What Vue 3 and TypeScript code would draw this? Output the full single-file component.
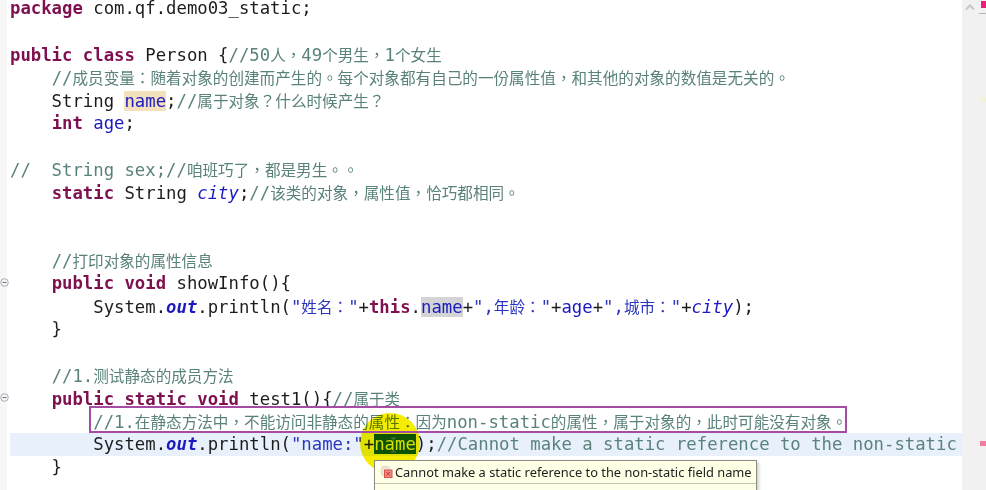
<script setup lang="ts">
type Tok = [string, string?]
interface Line { toks: Tok[]; fold?: boolean; current?: boolean }

const lines: Line[] = [
  { toks: [['package', 'kw'], [' com.qf.demo03_static;']] },
  { toks: [] },
  { toks: [['public', 'kw'], [' '], ['class', 'kw'], [' Person {'], ['//50人，49个男生，1个女生', 'cm']] },
  { toks: [['    '], ['//成员变量：随着对象的创建而产生的。每个对象都有自己的一份属性值，和其他的对象的数值是无关的。', 'cm']] },
  { toks: [['    String '], ['name', 'fd hl-occ'], [';'], ['//属于对象？什么时候产生？', 'cm']] },
  { toks: [['    '], ['int', 'kw'], [' '], ['age', 'fd'], [';']] },
  { toks: [] },
  { toks: [['//  String sex;//咱班巧了，都是男生。。', 'cm']] },
  { toks: [['    '], ['static', 'kw'], [' String '], ['city', 'fd it'], [';'], ['//该类的对象，属性值，恰巧都相同。', 'cm']] },
  { toks: [] },
  { toks: [] },
  { toks: [['    '], ['//打印对象的属性信息', 'cm']] },
  { fold: true, toks: [['    '], ['public', 'kw'], [' '], ['void', 'kw'], [' showInfo(){']] },
  { toks: [['        System.'], ['out', 'fd it bd'], ['.println('], ['"姓名："', 'st'], ['+'], ['this', 'kw'], ['.'], ['name', 'fd hl-read'], ['+'], ['",年龄："', 'st'], ['+'], ['age', 'fd'], ['+'], ['",城市："', 'st'], ['+'], ['city', 'fd it'], [');']] },
  { toks: [['    }']] },
  { toks: [] },
  { toks: [['    '], ['//1.测试静态的成员方法', 'cm']] },
  { fold: true, toks: [['    '], ['public', 'kw'], [' '], ['static', 'kw'], [' '], ['void', 'kw'], [' test1(){'], ['//属于类', 'cm']] },
  { toks: [['        '], ['//1.在静态方法中，不能访问非静态的属性：因为non-static的属性，属于对象的，此时可能没有对象。', 'cm']] },
  { current: true, toks: [['        System.'], ['out', 'fd it bd'], ['.println('], ['"name:"', 'st'], ['+'], ['name', 'hl-err'], [');'], ['//Cannot make a static reference to the non-static', 'cm']] },
  { toks: [['    }']] },
]

// CJK runs are set smaller than the Latin code font; full-width punctuation sits centred in its cell.
function pieces(text: string): { t: string; cls: string }[] {
  return text
    .split(/([，。：？]+|[\u3000-\u9fff]+)/)
    .filter((t) => t.length > 0)
    .map((t) => ({
      t,
      cls: /[，。：？]/.test(t) ? 'cjk punct' : /[\u3000-\u9fff]/.test(t) ? 'cjk' : '',
    }))
}
</script>

<template>
  <div class="screen">
    <div class="editor">
      <div class="ruler"></div>
      <div class="code">
        <div v-for="(line, i) in lines" :key="i" class="row" :class="{ current: line.current }">
          <svg v-if="line.fold" class="fold" width="9" height="9" viewBox="0 0 9 9">
            <circle cx="4.5" cy="4.5" r="3.8" fill="#f4f4f6" stroke="#a9adb5" />
            <path d="M2.5 4.5h4" stroke="#6d7280" />
          </svg>
          <span v-for="(tok, j) in line.toks" :key="j" :class="tok[1]"><span
            v-for="(p, k) in pieces(tok[0])" :key="k" :class="p.cls">{{ p.t }}</span></span>
        </div>
      </div>
      <div class="overview">
        <div class="ov-top">
          <svg width="12" height="8" viewBox="0 0 12 8"><path d="M2 6.5 6 2.5l4 4" fill="none" stroke="#c9c9c9" stroke-width="2" /></svg>
          <i class="ov-square"></i>
        </div>
        <i class="ov-line"></i>
        <i class="ov-warn"></i>
        <i class="ov-err"></i>
      </div>
    </div>

    <div class="spot"></div>
    <div class="callout"></div>
    <svg class="ibeam" width="7" height="16" viewBox="0 0 7 16">
      <path d="M1 1h2l.5 .6L4 1h2M3.500 1.600v12.800M1 15h2l.5-.6.5 .6h2" fill="none" stroke="#6f6f55" />
    </svg>

    <div class="tip">
      <div class="tip-head">
        <svg class="tip-icon" width="13" height="13" viewBox="0 0 13 13">
          <rect x="0.500" y="0.500" width="8" height="9" rx="2" fill="#efe6d6" stroke="#ded3bf" />
          <rect x="3.500" y="4" width="7.500" height="7.500" fill="#ee8a84" stroke="#d9534f" />
          <path d="M5.500 6l3.500 3.500M9 6 5.500 9.500" stroke="#c9302c" />
        </svg>
        <span>Cannot make a static reference to the non-static field name</span>
      </div>
      <div class="tip-foot"></div>
    </div>
  </div>
</template>

<style>
html, body { margin: 0; background: #fff; }
</style>

<style scoped>
.screen {
  position: relative;
  width: 986px;
  height: 490px;
  overflow: hidden;
  background: #fff;
  filter: blur(0.35px);
}
.editor {
  display: flex;
  height: 100%;
}
.ruler {
  width: 7px;
  flex: none;
  background: #f7f7f7;
  margin-right: 3px;
}
.code {
  flex: 1;
  min-width: 0;
  margin-top: -3px;
  font-family: "DejaVu Sans Mono", monospace;
  font-size: 17.3px;
  color: #1c1c1c;
}
.row {
  position: relative;
  height: 22.95px;
  line-height: 22.95px;
  white-space: pre;
}
.row.current { background: #e8f1fb; }
.cjk {
  font-family: "Noto Sans CJK SC", sans-serif;
  font-size: 15.6px;
}
.punct { font-family: "Noto Sans CJK TC", sans-serif; }
.kw { color: #7f1050; font-weight: 700; }
.cm { color: #5a827c; }
.st { color: #2a35c0; }
.fd { color: #1a1ac0; }
.it { font-style: italic; }
.bd { font-weight: 700; }
.hl-occ { background: #f3e0bd; }
.hl-read { background: #d4d4d4; }
.hl-err { background: #0b5a2c; color: #e0f070; }
.fold {
  position: absolute;
  left: -10px;
  top: 6px;
}
.overview {
  position: relative;
  width: 24px;
  flex: none;
  background: #f1f1f1;
}
.ov-top {
  display: flex;
  align-items: flex-start;
  gap: 5px;
  padding: 1px 0 0 2px;
}
.ov-top svg { margin-top: 2px; }
.ov-square {
  width: 5px;
  height: 7px;
  background: #ee1f78;
}
.ov-line {
  position: absolute;
  left: 17px;
  top: 13px;
  width: 7px;
  height: 1px;
  background: #b5b5b5;
}
.ov-warn {
  position: absolute;
  left: 17px;
  top: 97px;
  width: 7px;
  height: 5px;
  background: #f1f1dc;
}
.ov-err {
  position: absolute;
  left: 18px;
  top: 441px;
  width: 6px;
  height: 5px;
  background: #f07ca0;
}
.spot {
  position: absolute;
  left: 360px;
  top: 413px;
  width: 60px;
  height: 60px;
  border-radius: 50%;
  background: #f5ec00;
  mix-blend-mode: multiply;
}
.callout {
  position: absolute;
  left: 89px;
  top: 406px;
  width: 754px;
  height: 23px;
  border: 2px solid #a64ca6;
}
.ibeam {
  position: absolute;
  left: 390px;
  top: 437px;
}
.tip {
  position: absolute;
  left: 374px;
  top: 460px;
  width: 381px;
  height: 40px;
  background: #ffffe6;
  border: 1px solid #8c8c80;
  box-shadow: 2px 2px 3px rgba(0, 0, 0, 0.18);
}
.tip-head {
  display: flex;
  align-items: center;
  gap: 1px;
  height: 22px;
  padding-left: 6px;
  border-bottom: 1px solid #c4c4b4;
  font-family: "Noto Sans", sans-serif;
  font-size: 12.85px;
  color: #222;
  white-space: nowrap;
}
.tip-icon { flex: none; }
</style>
